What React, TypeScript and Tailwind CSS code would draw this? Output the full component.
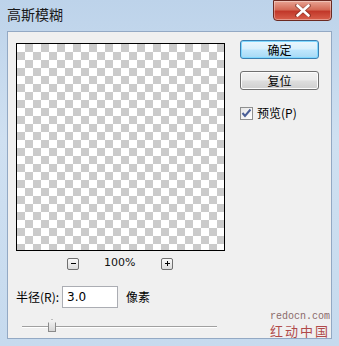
import React from "react";

const cjk = { fontFamily: '"Noto Sans CJK SC", "Liberation Sans", sans-serif' };

export default function App() {
  return (
    <div className="w-[339px] h-[346px] overflow-hidden bg-[linear-gradient(180deg,#bdd3ea_0%,#cfe0f1_40%,#c6daee_100%)] flex flex-col" style={cjk}>
      {/* title bar */}
      <div className="h-[31px] flex items-start shrink-0">
        <div className="pl-[7px] pt-[5px] text-[14px] leading-[18px] text-[#1a1a1a]">高斯模糊</div>
        <div className="ml-auto mr-[7px] w-[59px] h-[21px] rounded-b-[4px] border border-[#6b2a22] bg-[linear-gradient(180deg,#e8a493_0%,#d46b57_45%,#c2382a_55%,#d8604c_100%)] flex items-center justify-center shadow-[inset_0_0_0_1px_rgba(255,255,255,0.35)]">
          <svg width="16" height="13" viewBox="0 0 16 13">
            <path d="M2 1.5 L14 11.5 M14 1.5 L2 11.5" stroke="#5a1d16" strokeWidth="4" strokeLinecap="round" opacity="0.5" />
            <path d="M2.5 1.5 L13.5 11.5 M13.5 1.5 L2.5 11.5" stroke="#ffffff" strokeWidth="2.6" strokeLinecap="round" />
          </svg>
        </div>
      </div>
      {/* client */}
      <div className="mx-[7px] mb-[7px] flex-1 bg-[#f0f0f0] border border-[#93a9c4] relative flex flex-col">
        <div className="flex pl-[8px] pt-[11px]">
          <div className="flex flex-col">
            <div className="w-[209px] h-[208px] border border-black bg-[repeating-conic-gradient(#cbcbcb_0_25%,#ffffff_0_50%)] bg-[length:16px_16px]" />
            <div className="flex items-center mt-[6px] h-[13px]">
              <div className="ml-[51px] w-[12px] h-[12px] border border-[#707070] rounded-[2px] bg-[linear-gradient(180deg,#fafafa,#dcdcdc)] flex items-center justify-center">
                <div className="w-[5px] h-[1px] bg-black" />
              </div>
              <div className="ml-[25px] text-[11px] text-[#111]" style={{ fontFamily: '"DejaVu Sans", sans-serif' }}>100%</div>
              <div className="ml-[26px] w-[12px] h-[12px] border border-[#707070] rounded-[2px] bg-[linear-gradient(180deg,#fafafa,#dcdcdc)] flex items-center justify-center relative">
                <div className="w-[5px] h-[1px] bg-black" />
                <div className="absolute w-[1px] h-[5px] bg-black" />
              </div>
            </div>
          </div>
          <div className="flex flex-col ml-[15px] -mt-[3px]">
            <div className="w-[79px] h-[19px] rounded-[3px] border border-[#3c7fb1] bg-[linear-gradient(180deg,#eaf6fd_0%,#d9f0fc_45%,#bee6fd_55%,#a7d9f5_100%)] shadow-[inset_0_0_0_1px_#7fd8ff] flex items-center justify-center text-[12px] text-black">确定</div>
            <div className="mt-[12px] w-[79px] h-[19px] rounded-[3px] border border-[#707070] bg-[linear-gradient(180deg,#f2f2f2_0%,#ebebeb_45%,#dddddd_55%,#cfcfcf_100%)] shadow-[inset_0_0_0_1px_#fcfcfc] flex items-center justify-center text-[12px] text-black">复位</div>
            <div className="mt-[14px] flex items-center">
              <div className="w-[13px] h-[13px] border border-[#8e8f8f] bg-[linear-gradient(135deg,#e6e6e6,#ffffff)] flex items-center justify-center">
                <svg width="11" height="10" viewBox="0 0 11 10">
                  <path d="M1.5 5 L4 8 L9.5 1.5" fill="none" stroke="#4a5f97" strokeWidth="2" />
                </svg>
              </div>
              <div className="ml-[4px] text-[12px] text-black">预览(P)</div>
            </div>
          </div>
        </div>
        <div className="flex items-center pl-[8px] mt-[16px]">
          <div className="text-[12px] text-black">半径(R):</div>
          <div className="ml-[3px] w-[56px] h-[22px] border border-[#abadb3] bg-white flex items-center pl-[4px] text-[12px] text-black" style={{ fontFamily: '"DejaVu Sans", sans-serif' }}>3.0</div>
          <div className="ml-[8px] text-[12px] text-black">像素</div>
        </div>
        <div className="relative ml-[14px] mt-[13px] w-[195px] h-[12px] flex items-center">
          <div className="w-full h-[2px] border-t border-[#a0a0a0] border-b border-b-white" />
          <div className="absolute left-[26px] top-[-2px] w-[8px] h-[13px] border border-[#8a8a8a] bg-[linear-gradient(180deg,#f4f4f4,#d6d6d6)] [clip-path:polygon(0_30%,50%_0,100%_30%,100%_100%,0_100%)]" />
        </div>
        <div className="absolute right-[0px] bottom-[0px] flex flex-col items-end gap-[2px] pr-[1px]">
          <div className="text-[10px] leading-[10px] text-[#8a6a6a]" style={{ fontFamily: '"Liberation Mono", monospace' }}>redocn.com</div>
          <div className="text-[13px] leading-[14px] text-[#b04a4a] tracking-[2px]">红动中国</div>
        </div>
      </div>
    </div>
  );
}
